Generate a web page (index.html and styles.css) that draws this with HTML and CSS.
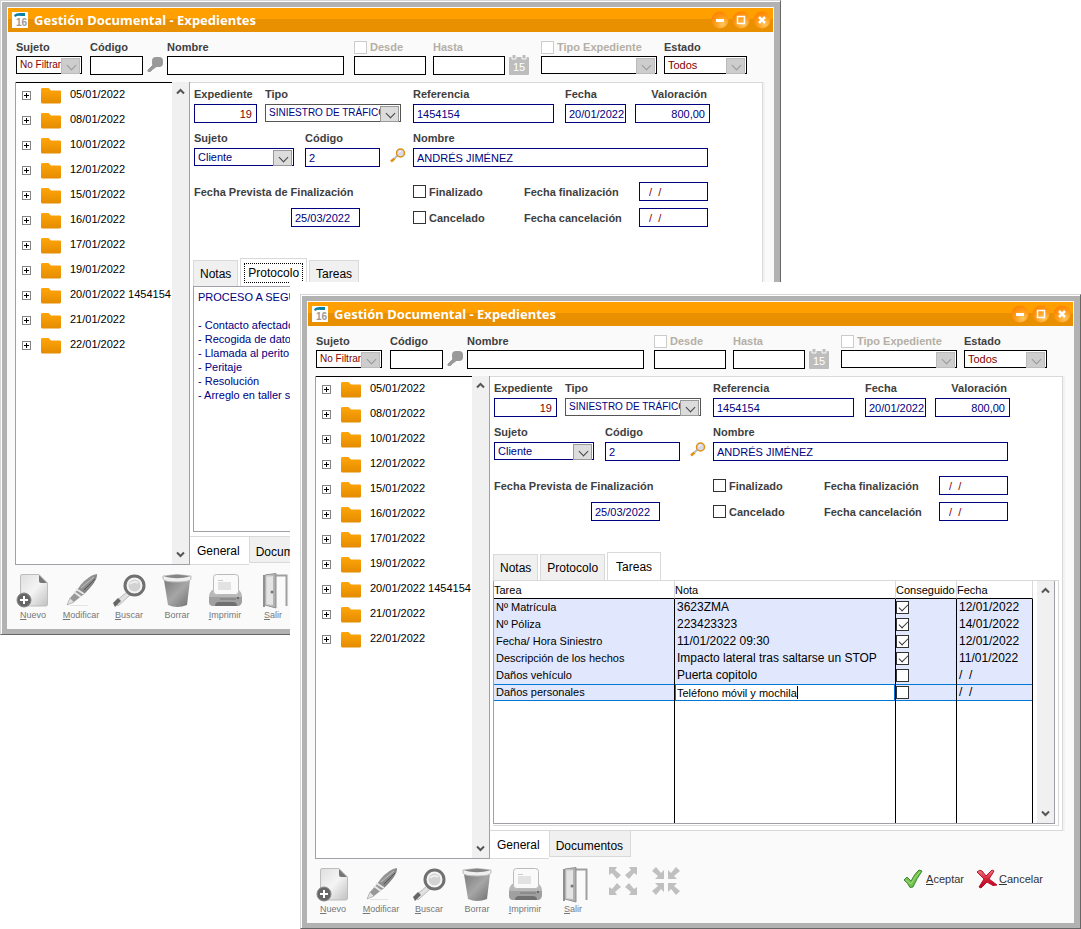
FILE: index.html
```html
<!DOCTYPE html>
<html lang="es">
<head>
    <meta charset="UTF-8">
    <meta name="viewport" content="width=device-width, initial-scale=1.0">
    <title>Gestión Documental - Expedientes</title>
    <link rel="stylesheet" href="styles.css">
</head>
<body>
    <!-- Shared icons -->
    <svg class="sprite" width="0" height="0" aria-hidden="true">
        <defs>
            <linearGradient id="gFolder" x1="0" y1="0" x2="0" y2="1"><stop offset="0" stop-color="#ffa50a"/><stop offset="1" stop-color="#e48c00"/></linearGradient>
            <linearGradient id="gPaper" x1="0" y1="0" x2="1" y2="1"><stop offset="0" stop-color="#dedede"/><stop offset="0.5" stop-color="#f4f4f4"/><stop offset="1" stop-color="#c0c0c0"/></linearGradient>
            <linearGradient id="gGrey" x1="0" y1="0" x2="1" y2="0"><stop offset="0" stop-color="#dcdcdc"/><stop offset="1" stop-color="#a8a8a8"/></linearGradient>
            <linearGradient id="gBin" x1="0" y1="0" x2="1" y2="1"><stop offset="0" stop-color="#7c7c7c"/><stop offset="0.5" stop-color="#a6a6a6"/><stop offset="1" stop-color="#707070"/></linearGradient>
            <linearGradient id="gPen" x1="0" y1="0" x2="1" y2="1"><stop offset="0" stop-color="#b4b4b4"/><stop offset="0.5" stop-color="#8c8c8c"/><stop offset="1" stop-color="#606060"/></linearGradient>
            <linearGradient id="gRed" x1="0" y1="0" x2="0" y2="1"><stop offset="0" stop-color="#f08088"/><stop offset="0.5" stop-color="#d82038"/><stop offset="1" stop-color="#b80020"/></linearGradient>
            <radialGradient id="gBall" cx="0.65" cy="0.75" r="0.75"><stop offset="0" stop-color="#ffc860"/><stop offset="0.5" stop-color="#ffa020"/><stop offset="1" stop-color="#ff8400"/></radialGradient>
        </defs>
        <symbol id="i-app" viewBox="0 0 16 16">
            <rect width="16" height="16" fill="#fff"/>
            <path d="M2 3 Q4 1 8 1 H13 V4 H9 Q6 3 3 5 Z" fill="#0a7fa8"/>
        </symbol>
        <symbol id="i-min" viewBox="0 0 18 18">
            <circle cx="9" cy="9" r="8.5" fill="url(#gBall)"/><path d="M5 9.500 H13" stroke="#fff" stroke-width="3"/>
        </symbol>
        <symbol id="i-max" viewBox="0 0 18 18">
            <circle cx="9" cy="9" r="8.5" fill="url(#gBall)"/><rect x="5.500" y="5.500" width="7" height="7" fill="none" stroke="#fff" stroke-width="1.500"/>
        </symbol>
        <symbol id="i-close" viewBox="0 0 18 18">
            <circle cx="9" cy="9" r="8.5" fill="url(#gBall)"/><path d="M6 6 L12 12 M12 6 L6 12" stroke="#fff" stroke-width="2.500"/>
        </symbol>
        <symbol id="i-folder" viewBox="0 0 20 16">
            <path d="M0 1.500 Q0 0 1 0 H7.500 L10 2.500 H19 Q20 2.500 20 3.500 V14 Q20 15.500 18.500 15.500 H1.500 Q0 15.500 0 14 Z" fill="url(#gFolder)"/>
        </symbol>
        <symbol id="i-key" viewBox="0 0 16 17">
            <rect x="5" y="1" width="11" height="10" rx="4" fill="#999"/>
            <path d="M7 8 L1 14 V15.500 H3.500 L5.500 13.500 L10 10" fill="#999" stroke="#999"/>
        </symbol>
        <symbol id="i-cal" viewBox="0 0 20 20">
            <path d="M0 3 Q0 2 1 2 H19 Q20 2 20 3 V19 Q20 20 19 20 H1 Q0 20 0 19 Z" fill="#bdbdbd"/>
            <path d="M3 0 V4 H7 V0 M13 0 V4 H17 V0" fill="#bdbdbd" stroke="#fafafa"/>
        </symbol>
        <symbol id="i-lens" viewBox="0 0 16 15">
            <path d="M4.500 10.500 L1 13.500" stroke="#e09010" stroke-width="2.500"/>
            <path d="M7.500 7.500 L4.500 10.500" stroke="#bbb" stroke-width="2"/>
            <circle cx="10.500" cy="5" r="4" fill="#d8d8e8" stroke="#e09010" stroke-width="1.500"/>
            <path d="M8.500 4.500 L11 3" stroke="#fff"/>
        </symbol>
        <symbol id="i-new" viewBox="0 0 34 36">
            <path d="M6 1.500 H23 L31.500 10 V31 Q31.500 33 30 33 H6 Q4.500 33 4.500 31 V3 Q4.500 1.500 6 1.500 Z" fill="url(#gPaper)" stroke="#bdbdbd"/>
            <path d="M23 2 V8 Q23 10 25 10 H31 Z" fill="#777"/>
            <circle cx="8" cy="27" r="7" fill="#666" stroke="#888"/>
            <path d="M8 23 V31 M4 27 H12" stroke="#fff" stroke-width="2"/>
        </symbol>
        <symbol id="i-edit" viewBox="0 0 34 36">
            <path d="M6 32.500 H24" stroke="#e4e4e4"/>
            <path d="M3 32 L6 25 L14 16 L20 21 L10 29 Z" fill="#989898"/>
            <path d="M6 25 L10 29 L3 32 Z" fill="#e2e2e2" stroke="#999" stroke-width="0.500"/>
            <path d="M13 17 Q20 6 29 2 L33 1 Q34 8 19 22 Z" fill="url(#gPen)"/>
            <path d="M10 19 L17 24 M12 16 L20 21" stroke="#e8e8e8" stroke-width="2"/>
            <path d="M17 15 L30 4" stroke="#c4c4c4"/>
            <path d="M20 17 L31 6" stroke="#555"/>
        </symbol>
        <symbol id="i-find" viewBox="0 0 34 36">
            <path d="M3 29 L15 19 L18 22 L6 33 Z" fill="#e2e2e2" stroke="#b8b8b8"/>
            <path d="M1 30 L6 25 L9 28 L3 34 Z" fill="#666"/>
            <circle cx="22.500" cy="12.500" r="9.500" fill="#f4f4f4" stroke="#707070" stroke-width="3"/>
            <circle cx="22.500" cy="12.500" r="6" fill="#d2d2d2"/>
            <path d="M18 11 Q22 7 26 10" fill="none" stroke="#eee" stroke-width="2"/>
        </symbol>
        <symbol id="i-bin" viewBox="0 0 34 36">
            <path d="M4 7 H30 L27 32 Q17 36 8 32 Z" fill="url(#gBin)"/>
            <path d="M3 3 Q17 0 31 3 V6 Q30 9 17 9 Q4 9 3 6 Z" fill="#efefef" stroke="#bbb"/>
            <path d="M4 3.500 Q17 0 30 3.500 Q17 7 4 3.500 Z" fill="#858585"/>
        </symbol>
        <symbol id="i-print" viewBox="0 0 34 36">
            <path d="M4 17 H31 Q34 20 34 23 V29 L30 33 H5 L1 29 V23 Q1 20 4 17 Z" fill="#b8b8b8"/>
            <path d="M1 24 H34 V29 Q33 33 30 33 H5 Q1 33 1 29 Z" fill="#a0a0a0"/>
            <path d="M7 33 Q7 29 11 29 H25 Q29 29 29 33 Z" fill="#707070"/>
            <rect x="5.500" y="1.500" width="25" height="20" rx="3" fill="#fafafa" stroke="#bbb"/>
            <path d="M10 7.500 H15" stroke="#ccc"/>
            <rect x="10" y="9" width="13" height="8" fill="#e2e2e2"/>
            <path d="M12 26 H28" stroke="#777"/>
            <circle cx="30" cy="25" r="1" fill="#555"/>
        </symbol>
        <symbol id="i-exit" viewBox="0 0 34 36">
            <path d="M18 2.500 H30.500 V33" fill="none" stroke="#a0a0a0" stroke-width="2"/>
            <path d="M8 2 V34" stroke="#909090" stroke-width="2"/>
            <path d="M9 2 L20 0.500 V35 L9 32 Z" fill="url(#gGrey)" stroke="#909090"/>
            <path d="M11 4 L17 3 V32 L11 31 Z" fill="#e4e4e4"/>
            <circle cx="16" cy="19" r="1.5" fill="#777"/>
        </symbol>
        <symbol id="i-expand" viewBox="0 0 28 28">
            <path d="M0 0 H8 L6 3 L12 8 L8 12 L3 6 L0 8 Z M28 0 V8 L25 6 L20 12 L16 8 L22 3 L20 0 Z M0 28 V20 L3 22 L8 16 L12 20 L6 25 L8 28 Z M28 28 H20 L22 25 L16 20 L20 16 L25 22 L28 20 Z" fill="#c0c0c0"/>
        </symbol>
        <symbol id="i-shrink" viewBox="0 0 28 28">
            <path d="M12 12 H3 L6 9 L0 4 L4 0 L9 6 L12 3 Z M16 12 V3 L19 6 L24 0 L28 4 L22 9 L25 12 Z M12 16 V25 L9 22 L4 28 L0 24 L6 19 L3 16 Z M16 16 H25 L22 19 L28 24 L24 28 L19 22 L16 25 Z" fill="#c0c0c0"/>
        </symbol>
        <symbol id="i-ok" viewBox="0 0 21 20">
            <path d="M1 11 L4 8 L8 12 Q12 4 16 1 L19 2 Q14 9 10 18 L7 18.500 Q5 14 1 11 Z" fill="#72c04e" stroke="#3f8a34"/>
            <path d="M3 11 L8 15 Q12 7 17 3" fill="none" stroke="#a4dc80"/>
        </symbol>
        <symbol id="i-cancel" viewBox="0 0 21 20">
            <path d="M1 3 Q4 0 6 2 L10 7 L16 1 L18 2 L13 10 L21 16 L17 16.500 L11 13 L5 19 L3 18 L8 10 Z" fill="url(#gRed)" stroke="#b8102c"/>
        </symbol>
        <symbol id="i-up" viewBox="0 0 9 7"><path d="M1 5.500 L4.500 2 L8 5.500" fill="none" stroke="#555" stroke-width="2"/></symbol>
        <symbol id="i-down" viewBox="0 0 9 7"><path d="M1 1.500 L4.500 5 L8 1.500" fill="none" stroke="#555" stroke-width="2"/></symbol>
    </svg>

    <div class="desktop">

        <!-- Window: Protocolo tab -->
        <div class="layer">
            <section class="window">
                <div class="frame">
                    <header class="titlebar">
                        <svg class="app-icon"><use href="#i-app"/><text x="4" y="14">16</text></svg>
                        <h1>Gestión Documental - Expedientes</h1>
                        <button type="button" aria-label="Minimizar"><svg><use href="#i-min"/></svg></button>
                        <button type="button" aria-label="Maximizar"><svg><use href="#i-max"/></svg></button>
                        <button type="button" aria-label="Cerrar"><svg><use href="#i-close"/></svg></button>
                    </header>

                    <form class="filters">
                        <div class="field"><label for="a-fsujeto">Sujeto</label><span class="combo off w66"><select id="a-fsujeto" class="maroon small"><option>No Filtrar</option></select></span></div>
                        <div class="field"><label for="a-fcodigo">Código</label><input type="text" id="a-fcodigo" class="w53"></div>
                        <svg class="key"><use href="#i-key"/></svg>
                        <div class="field"><label for="a-fnombre">Nombre</label><input type="text" id="a-fnombre" class="w177"></div>
                        <div class="field dim"><span class="check-label"><input type="checkbox" id="a-cdesde"><label for="a-cdesde">Desde</label></span><input type="text" aria-label="Desde" class="w72"></div>
                        <div class="field dim"><label for="a-hasta">Hasta</label><input type="text" id="a-hasta" class="w72"></div>
                        <svg class="calendar"><use href="#i-cal"/><text x="4" y="16">15</text></svg>
                        <div class="field dim"><span class="check-label"><input type="checkbox" id="a-ctipo"><label for="a-ctipo">Tipo Expediente</label></span><span class="combo off w116"><select aria-label="Tipo Expediente"><option></option></select></span></div>
                        <div class="field"><label for="a-estado">Estado</label><span class="combo off w83"><select id="a-estado" class="maroon"><option>Todos</option></select></span></div>
                    </form>

                    <div class="main">
                        <div class="tree">
                            <ul>
                                <li><button type="button" class="plus" aria-label="Abrir"></button><svg><use href="#i-folder"/></svg>05/01/2022</li>
                                <li><button type="button" class="plus" aria-label="Abrir"></button><svg><use href="#i-folder"/></svg>08/01/2022</li>
                                <li><button type="button" class="plus" aria-label="Abrir"></button><svg><use href="#i-folder"/></svg>10/01/2022</li>
                                <li><button type="button" class="plus" aria-label="Abrir"></button><svg><use href="#i-folder"/></svg>12/01/2022</li>
                                <li><button type="button" class="plus" aria-label="Abrir"></button><svg><use href="#i-folder"/></svg>15/01/2022</li>
                                <li><button type="button" class="plus" aria-label="Abrir"></button><svg><use href="#i-folder"/></svg>16/01/2022</li>
                                <li><button type="button" class="plus" aria-label="Abrir"></button><svg><use href="#i-folder"/></svg>17/01/2022</li>
                                <li><button type="button" class="plus" aria-label="Abrir"></button><svg><use href="#i-folder"/></svg>19/01/2022</li>
                                <li><button type="button" class="plus" aria-label="Abrir"></button><svg><use href="#i-folder"/></svg>20/01/2022 1454154</li>
                                <li><button type="button" class="plus" aria-label="Abrir"></button><svg><use href="#i-folder"/></svg>21/01/2022</li>
                                <li><button type="button" class="plus" aria-label="Abrir"></button><svg><use href="#i-folder"/></svg>22/01/2022</li>
                            </ul>
                            <div class="scrollbar"><svg><use href="#i-up"/></svg><svg><use href="#i-down"/></svg></div>
                        </div>

                        <div class="content">
                            <div class="panel">
                                <form class="record">
                                    <div class="row row-a">
                                        <div class="field"><label for="a-exp">Expediente</label><input type="text" id="a-exp" class="w63 right maroon" value="19"></div>
                                        <div class="field"><label for="a-tipo">Tipo</label><span class="combo grey w136"><select id="a-tipo" class="small"><option>SINIESTRO DE TRÁFICO</option></select></span></div>
                                        <div class="field"><label for="a-ref">Referencia</label><input type="text" id="a-ref" class="w141" value="1454154"></div>
                                        <div class="field"><label for="a-fecha">Fecha</label><input type="text" id="a-fecha" class="w61" value="20/01/2022"></div>
                                        <div class="field"><label for="a-val" class="right">Valoración</label><input type="text" id="a-val" class="w75 right" value="800,00"></div>
                                    </div>
                                    <div class="row row-b">
                                        <div class="field"><label for="a-sujeto">Sujeto</label><span class="combo w100"><select id="a-sujeto"><option>Cliente</option></select></span></div>
                                        <div class="field"><label for="a-codigo">Código</label><input type="text" id="a-codigo" class="w75" value="2"></div>
                                        <svg class="lens"><use href="#i-lens"/></svg>
                                        <div class="field"><label for="a-nombre">Nombre</label><input type="text" id="a-nombre" class="w295" value="ANDRÉS JIMÉNEZ"></div>
                                    </div>
                                    <div class="row row-c">
                                        <label for="a-prev">Fecha Prevista de Finalización</label>
                                        <span class="check-label"><input type="checkbox" id="a-fin"><label for="a-fin">Finalizado</label></span>
                                        <label for="a-ffin">Fecha finalización</label>
                                        <input type="text" id="a-ffin" class="w69 maroon empty-date" value="/  /">
                                        <input type="text" id="a-prev" class="w69 planned" value="25/03/2022">
                                        <span class="check-label"><input type="checkbox" id="a-can"><label for="a-can">Cancelado</label></span>
                                        <label for="a-fcan">Fecha cancelación</label>
                                        <input type="text" id="a-fcan" class="w69 maroon empty-date" value="/  /">
                                    </div>
                                </form>

                                <nav class="tabs">
                                    <button type="button">Notas</button>
                                    <button type="button" class="active focused"><span>Protocolo</span></button>
                                    <button type="button">Tareas</button>
                                </nav>
                                <textarea class="memo" aria-label="Protocolo">PROCESO A SEGUIR

- Contacto afectado
- Recogida de datos
- Llamada al perito
- Peritaje
- Resolución
- Arreglo en taller s</textarea>
                            </div>
                            <nav class="bottom-tabs">
                                <button type="button" class="active">General</button>
                                <button type="button">Documentos</button>
                            </nav>
                        </div>
                    </div>

                    <footer class="toolbar">
                        <button type="button" class="tool"><svg><use href="#i-new"/></svg><span><u>N</u>uevo</span></button>
                        <button type="button" class="tool"><svg><use href="#i-edit"/></svg><span><u>M</u>odificar</span></button>
                        <button type="button" class="tool"><svg><use href="#i-find"/></svg><span><u>B</u>uscar</span></button>
                        <button type="button" class="tool"><svg><use href="#i-bin"/></svg><span>Borrar</span></button>
                        <button type="button" class="tool"><svg><use href="#i-print"/></svg><span><u>I</u>mprimir</span></button>
                        <button type="button" class="tool"><svg><use href="#i-exit"/></svg><span><u>S</u>alir</span></button>
                    </footer>
                </div>
            </section>
        </div>

        <!-- Window: Tareas tab -->
        <div class="layer front">
            <section class="window">
                <div class="frame">
                    <header class="titlebar">
                        <svg class="app-icon"><use href="#i-app"/><text x="4" y="14">16</text></svg>
                        <h1>Gestión Documental - Expedientes</h1>
                        <button type="button" aria-label="Minimizar"><svg><use href="#i-min"/></svg></button>
                        <button type="button" aria-label="Maximizar"><svg><use href="#i-max"/></svg></button>
                        <button type="button" aria-label="Cerrar"><svg><use href="#i-close"/></svg></button>
                    </header>

                    <form class="filters">
                        <div class="field"><label for="b-fsujeto">Sujeto</label><span class="combo off w66"><select id="b-fsujeto" class="maroon small"><option>No Filtrar</option></select></span></div>
                        <div class="field"><label for="b-fcodigo">Código</label><input type="text" id="b-fcodigo" class="w53"></div>
                        <svg class="key"><use href="#i-key"/></svg>
                        <div class="field"><label for="b-fnombre">Nombre</label><input type="text" id="b-fnombre" class="w177"></div>
                        <div class="field dim"><span class="check-label"><input type="checkbox" id="b-cdesde"><label for="b-cdesde">Desde</label></span><input type="text" aria-label="Desde" class="w72"></div>
                        <div class="field dim"><label for="b-hasta">Hasta</label><input type="text" id="b-hasta" class="w72"></div>
                        <svg class="calendar"><use href="#i-cal"/><text x="4" y="16">15</text></svg>
                        <div class="field dim"><span class="check-label"><input type="checkbox" id="b-ctipo"><label for="b-ctipo">Tipo Expediente</label></span><span class="combo off w116"><select aria-label="Tipo Expediente"><option></option></select></span></div>
                        <div class="field"><label for="b-estado">Estado</label><span class="combo off w83"><select id="b-estado" class="maroon"><option>Todos</option></select></span></div>
                    </form>

                    <div class="main">
                        <div class="tree">
                            <ul>
                                <li><button type="button" class="plus" aria-label="Abrir"></button><svg><use href="#i-folder"/></svg>05/01/2022</li>
                                <li><button type="button" class="plus" aria-label="Abrir"></button><svg><use href="#i-folder"/></svg>08/01/2022</li>
                                <li><button type="button" class="plus" aria-label="Abrir"></button><svg><use href="#i-folder"/></svg>10/01/2022</li>
                                <li><button type="button" class="plus" aria-label="Abrir"></button><svg><use href="#i-folder"/></svg>12/01/2022</li>
                                <li><button type="button" class="plus" aria-label="Abrir"></button><svg><use href="#i-folder"/></svg>15/01/2022</li>
                                <li><button type="button" class="plus" aria-label="Abrir"></button><svg><use href="#i-folder"/></svg>16/01/2022</li>
                                <li><button type="button" class="plus" aria-label="Abrir"></button><svg><use href="#i-folder"/></svg>17/01/2022</li>
                                <li><button type="button" class="plus" aria-label="Abrir"></button><svg><use href="#i-folder"/></svg>19/01/2022</li>
                                <li><button type="button" class="plus" aria-label="Abrir"></button><svg><use href="#i-folder"/></svg>20/01/2022 1454154</li>
                                <li><button type="button" class="plus" aria-label="Abrir"></button><svg><use href="#i-folder"/></svg>21/01/2022</li>
                                <li><button type="button" class="plus" aria-label="Abrir"></button><svg><use href="#i-folder"/></svg>22/01/2022</li>
                            </ul>
                            <div class="scrollbar"><svg><use href="#i-up"/></svg><svg><use href="#i-down"/></svg></div>
                        </div>

                        <div class="content">
                            <div class="panel">
                                <form class="record">
                                    <div class="row row-a">
                                        <div class="field"><label for="b-exp">Expediente</label><input type="text" id="b-exp" class="w63 right maroon" value="19"></div>
                                        <div class="field"><label for="b-tipo">Tipo</label><span class="combo grey w136"><select id="b-tipo" class="small"><option>SINIESTRO DE TRÁFICO</option></select></span></div>
                                        <div class="field"><label for="b-ref">Referencia</label><input type="text" id="b-ref" class="w141" value="1454154"></div>
                                        <div class="field"><label for="b-fecha">Fecha</label><input type="text" id="b-fecha" class="w61" value="20/01/2022"></div>
                                        <div class="field"><label for="b-val" class="right">Valoración</label><input type="text" id="b-val" class="w75 right" value="800,00"></div>
                                    </div>
                                    <div class="row row-b">
                                        <div class="field"><label for="b-sujeto">Sujeto</label><span class="combo w100"><select id="b-sujeto"><option>Cliente</option></select></span></div>
                                        <div class="field"><label for="b-codigo">Código</label><input type="text" id="b-codigo" class="w75" value="2"></div>
                                        <svg class="lens"><use href="#i-lens"/></svg>
                                        <div class="field"><label for="b-nombre">Nombre</label><input type="text" id="b-nombre" class="w295" value="ANDRÉS JIMÉNEZ"></div>
                                    </div>
                                    <div class="row row-c">
                                        <label for="b-prev">Fecha Prevista de Finalización</label>
                                        <span class="check-label"><input type="checkbox" id="b-fin"><label for="b-fin">Finalizado</label></span>
                                        <label for="b-ffin">Fecha finalización</label>
                                        <input type="text" id="b-ffin" class="w69 maroon empty-date" value="/  /">
                                        <input type="text" id="b-prev" class="w69 planned" value="25/03/2022">
                                        <span class="check-label"><input type="checkbox" id="b-can"><label for="b-can">Cancelado</label></span>
                                        <label for="b-fcan">Fecha cancelación</label>
                                        <input type="text" id="b-fcan" class="w69 maroon empty-date" value="/  /">
                                    </div>
                                </form>

                                <nav class="tabs">
                                    <button type="button">Notas</button>
                                    <button type="button">Protocolo</button>
                                    <button type="button" class="active">Tareas</button>
                                </nav>
                                <div class="page">
                                    <div class="grid">
                                        <table>
                                            <colgroup><col><col class="c-nota"><col class="c-ok"><col class="c-fecha"></colgroup>
                                            <thead>
                                                <tr><th>Tarea</th><th>Nota</th><th>Conseguido</th><th>Fecha</th></tr>
                                            </thead>
                                            <tbody>
                                                <tr><td>Nº Matrícula</td><td>3623ZMA</td><td><input type="checkbox" aria-label="Conseguido" checked></td><td>12/01/2022</td></tr>
                                                <tr><td>Nº Póliza</td><td>223423323</td><td><input type="checkbox" aria-label="Conseguido" checked></td><td>14/01/2022</td></tr>
                                                <tr><td>Fecha/ Hora Siniestro</td><td>11/01/2022 09:30</td><td><input type="checkbox" aria-label="Conseguido" checked></td><td>12/01/2022</td></tr>
                                                <tr><td>Descripción de los hechos</td><td>Impacto lateral tras saltarse un STOP</td><td><input type="checkbox" aria-label="Conseguido" checked></td><td>11/01/2022</td></tr>
                                                <tr><td>Daños vehículo</td><td>Puerta copitolo</td><td><input type="checkbox" aria-label="Conseguido"></td><td>/  /</td></tr>
                                                <tr class="current"><td>Daños personales</td><td class="editing"><span class="editor"><input type="text" aria-label="Nota" value="Teléfono móvil y mochila"><i class="caret"></i></span></td><td><input type="checkbox" aria-label="Conseguido"></td><td>/  /</td></tr>
                                                <tr class="filler"><td></td><td></td><td></td><td></td></tr>
                                            </tbody>
                                        </table>
                                        <div class="scrollbar"><svg><use href="#i-up"/></svg><svg><use href="#i-down"/></svg></div>
                                    </div>
                                </div>
                            </div>
                            <nav class="bottom-tabs">
                                <button type="button" class="active">General</button>
                                <button type="button">Documentos</button>
                            </nav>
                        </div>
                    </div>

                    <footer class="toolbar">
                        <button type="button" class="tool"><svg><use href="#i-new"/></svg><span><u>N</u>uevo</span></button>
                        <button type="button" class="tool"><svg><use href="#i-edit"/></svg><span><u>M</u>odificar</span></button>
                        <button type="button" class="tool"><svg><use href="#i-find"/></svg><span><u>B</u>uscar</span></button>
                        <button type="button" class="tool"><svg><use href="#i-bin"/></svg><span>Borrar</span></button>
                        <button type="button" class="tool"><svg><use href="#i-print"/></svg><span><u>I</u>mprimir</span></button>
                        <button type="button" class="tool"><svg><use href="#i-exit"/></svg><span><u>S</u>alir</span></button>
                        <div class="arrows">
                            <button type="button" aria-label="Expandir"><svg><use href="#i-expand"/></svg></button>
                            <button type="button" aria-label="Contraer"><svg><use href="#i-shrink"/></svg></button>
                        </div>
                        <div class="actions">
                            <button type="button"><svg><use href="#i-ok"/></svg><span><u>A</u>ceptar</span></button>
                            <button type="button"><svg><use href="#i-cancel"/></svg><span><u>C</u>ancelar</span></button>
                        </div>
                    </footer>
                </div>
            </section>
        </div>
    </div>
</body>
</html>
```
FILE: styles.css
```css
* {
    box-sizing: border-box;
}
body {
    margin: 0;
    background: #fff;
    font-family: "Liberation Sans", Arial, sans-serif;
    font-size: 11px;
    line-height: 14px;
    color: #000;
}
button, input, select, textarea {
    font: inherit;
    margin: 0;
    border-radius: 0;
    outline: none;
}
button {
    padding: 0;
    border: none;
    background: none;
    color: inherit;
    cursor: pointer;
}
svg {
    display: block;
    flex: none;
}
.sprite {
    position: absolute;
}

/* Stacked windows */
.desktop {
    display: grid;
}
.layer {
    grid-area: 1 / 1;
    align-self: start;
    min-width: 0;
    margin-right: 300px;
}
.front {
    margin: 282px 0 0 290px;
    padding: 12px 0 0 10px;
    background: #fff;
}
.window {
    border: 1px solid #d6d6d6;
    border-right-color: #666;
    border-bottom-color: #666;
    padding: 1px 0 0 1px;
}
.frame {
    border: 6px solid #b2b2b2;
    border-width: 5px 6px 5px 5px;
    padding: 1px;
    background: #fafafa;
}

/* Title bar */
.titlebar {
    display: flex;
    align-items: center;
    gap: 3px;
    height: 24px;
    padding: 0 2px 0 4px;
    background: linear-gradient(#ffa000 11px, #e89000 11px);
}
.titlebar h1 {
    flex: 1;
    margin: 0 0 0 3px;
    font-family: "Noto Sans", Tahoma, sans-serif;
    font-size: 13px;
    color: #fff;
}
.titlebar svg {
    width: 18px;
    height: 18px;
}
.titlebar .app-icon {
    width: 16px;
    height: 16px;
    font-size: 10px;
    font-weight: bold;
    fill: #9a9a9a;
}

/* Fields */
label {
    display: block;
    font-weight: bold;
    color: #404040;
    white-space: nowrap;
}
.dim label {
    color: #b5afa5;
}
input[type="text"] {
    display: block;
    height: 19px;
    padding: 0 0 0 3px;
    border: 1px solid #000080;
    background: #fff;
    color: #000080;
}
.combo {
    display: block;
    position: relative;
    height: 18px;
    border: 1px solid #000080;
    background: #fff;
}
.combo select {
    appearance: none;
    display: block;
    width: 100%;
    height: 16px;
    padding: 0 17px 0 3px;
    border: none;
    background: none;
    color: #000080;
}
.combo::before {
    content: "";
    position: absolute;
    top: 1px;
    right: 1px;
    width: 17px;
    height: 14px;
    border: 1px solid #999;
    background: #dcdcdc;
}
.combo::after {
    content: "";
    position: absolute;
    top: 5px;
    right: 6px;
    width: 6px;
    height: 6px;
    border: solid #444;
    border-width: 0 1px 1px 0;
    transform: rotate(45deg);
}
.combo.off::before {
    border-color: #bbb;
    background: #cdcdcd;
}
.combo.off::after {
    border-color: #999;
}
.combo.grey {
    border-color: #555;
}
.combo .small {
    font-size: 10px;
}
input[type="text"].maroon, .combo .maroon {
    color: #800000;
}
input[type="text"].right {
    padding-right: 4px;
}
.right {
    text-align: right;
}
input[type="checkbox"] {
    appearance: none;
    display: block;
    flex: none;
    width: 13px;
    height: 13px;
    border: 1px solid #333;
    background: #fff;
}
input[type="checkbox"]:checked::before {
    content: "";
    display: block;
    width: 8px;
    height: 4px;
    margin: 2px 0 0 2px;
    border: solid #333;
    border-width: 0 0 1px 1px;
    transform: rotate(-45deg);
}
.dim input[type="checkbox"] {
    border-color: #ccc;
}
.check-label {
    display: flex;
    align-items: center;
    gap: 3px;
}
.w53 { width: 53px; }
.w61 { width: 61px; }
.w63 { width: 63px; }
.w66 { width: 66px; }
.w69 { width: 69px; }
.w72 { width: 72px; }
.w75 { width: 75px; }
.w83 { width: 83px; }
.w100 { width: 100px; }
.w116 { width: 116px; }
.w136 { width: 136px; }
.w141 { width: 141px; }
.w177 { width: 177px; }
.w295 { width: 295px; }

/* Filter bar */
.filters {
    display: grid;
    grid-template-columns: 70px 53px 16px 183px 75px 72px 28px 119px 83px;
    column-gap: 4px;
    height: 50px;
    padding: 8px 0 0 8px;
}
.filters .field {
    display: flex;
    flex-direction: column;
    gap: 2px;
}
.filters input[type="text"], .filters .combo {
    border-color: #000;
}
.filters .key {
    width: 16px;
    height: 17px;
    margin-top: 16px;
}
.filters .calendar {
    width: 20px;
    height: 20px;
    margin-top: 15px;
    fill: #fff;
}

/* Tree and record */
.main {
    display: grid;
    grid-template-columns: 175px 1fr;
    padding: 0 10px 0 7px;
}
.tree {
    display: grid;
    grid-template-columns: 1fr 17px;
    border: solid #a0a0a6;
    border-width: 0 1px 1px;
    background: #fff;
}
.tree ul {
    margin: 0;
    padding: 0 0 0 6px;
    border-top: 1px solid #000;
    list-style: none;
}
.tree li {
    display: flex;
    align-items: center;
    height: 25px;
    padding-bottom: 3px;
    white-space: nowrap;
}
.tree li svg {
    width: 20px;
    height: 16px;
    margin: 3px 9px 0 10px;
}
.plus {
    width: 9px;
    height: 9px;
    margin-top: 3px;
    border: 1px solid #848484;
    background: linear-gradient(#000, #000) center / 5px 1px no-repeat, linear-gradient(#000, #000) center / 1px 5px no-repeat;
}
.scrollbar {
    display: flex;
    flex-direction: column;
    align-items: center;
    justify-content: space-between;
    padding: 6px 0;
    background: #f0f0f0;
}
.scrollbar svg {
    width: 9px;
    height: 7px;
}
.content {
    display: flex;
    flex-direction: column;
    min-width: 0;
}
.panel {
    display: flex;
    flex: 1;
    flex-direction: column;
    padding: 4px 3px 4px 3px;
    border: solid #d9d9d9;
    border-width: 1px 1px 1px 0;
    background: #fff;
    box-shadow: 2px 0 #f2f2f2;
}
.record {
    display: grid;
    gap: 8px;
    padding-left: 1px;
}
.row {
    display: grid;
    column-gap: 4px;
}
.row .field {
    display: flex;
    flex-direction: column;
    gap: 3px;
}
.row-a {
    grid-template-columns: 67px 144px 148px 66px 75px;
}
.row-b {
    grid-template-columns: 107px 81px 19px 295px;
}
.row-c {
    grid-template-columns: 215px 107px 111px 69px;
    row-gap: 7px;
    align-items: center;
    margin-top: 7px;
}
.row-a label.right {
    padding-right: 3px;
}
.lens {
    width: 16px;
    height: 15px;
    margin-top: 17px;
}
.planned {
    margin-left: 97px;
}
.row-c .empty-date {
    padding-left: 9px;
    white-space: pre;
}

/* Tabs */
.tabs {
    display: flex;
    align-items: flex-end;
    gap: 2px;
    height: 28px;
    margin-top: 31px;
    font-size: 12px;
}
.tabs button {
    height: 26px;
    padding: 0 6px;
    border: 1px solid #d9d9d9;
    border-bottom: none;
    background: #f0f0f0;
}
.tabs .active {
    height: 28px;
    padding: 0 8px;
    background: #fff;
}
.tabs .focused {
    padding: 0 3px;
}
.focused span {
    display: block;
    padding: 2px 3px;
    border: 1px dotted #000;
}
.memo {
    flex: 1;
    min-height: 246px;
    padding: 3px 4px;
    border: 1px solid #a0a0a6;
    background: #fff;
    color: #000080;
    resize: none;
    overflow: hidden;
}
.bottom-tabs {
    display: flex;
    align-items: flex-start;
    height: 28px;
    font-size: 12px;
}
.bottom-tabs button {
    height: 26px;
    padding: 4px 7px 0 6px;
    border: 1px solid #d9d9d9;
    border-top: none;
    background: #f0f0f0;
}
.bottom-tabs .active {
    height: 28px;
    padding: 0 9px 0 7px;
    border-left: none;
    border-right: none;
    background: #fff;
}

/* Task grid */
.page {
    padding: 0 3px 1px 0;
    border: solid #d9d9d9;
    border-width: 1px 1px 1px 0;
}
.grid {
    display: grid;
    grid-template-columns: 1fr 17px;
    border: solid #a0a0a6;
    border-width: 0 1px 1px;
}
.grid table {
    width: calc(100% - 4px);
    border-collapse: separate;
    border-spacing: 0;
    table-layout: fixed;
}
.c-nota {
    width: 221px;
}
.c-ok {
    width: 61px;
}
.c-fecha {
    width: 76px;
}
.grid th {
    height: 18px;
    padding: 0 1px 0 0;
    border-right: 1px solid #d9d9d9;
    border-bottom: 1px solid #000;
    font-weight: normal;
    text-align: left;
    white-space: nowrap;
}
.grid td {
    height: 17px;
    padding: 0 2px 1px;
    border-right: 1px solid #000;
    background: #e1e8fd;
    font-size: 12px;
    white-space: pre;
}
.grid td:first-child {
    font-size: 11px;
}
.grid td:nth-child(3) {
    padding: 0;
}
.grid .current td {
    box-shadow: inset 0 1px #0078d7, inset 0 -1px #0078d7;
}
.grid .current td.editing {
    padding: 0;
    background: #fff;
}
.editor {
    display: block;
    position: relative;
    border: 1px solid #0078d7;
}
.editor input[type="text"] {
    width: 100%;
    height: 15px;
    padding: 0 1px;
    border: none;
    color: #000;
    font-size: 11px;
}
.caret {
    position: absolute;
    top: 1px;
    left: 121px;
    width: 1px;
    height: 13px;
    background: #000;
}
.grid .filler td {
    height: 122px;
    background: #fff;
}

/* Toolbar */
.toolbar {
    display: flex;
    align-items: flex-start;
    height: 63px;
    padding: 8px 30px 0 1px;
}
.tool {
    width: 48px;
    font-size: 9px;
    line-height: 12px;
    color: #777;
    text-align: center;
}
.tool svg {
    width: 34px;
    height: 36px;
    margin: 0 auto;
}
.arrows {
    display: flex;
    gap: 15px;
    margin-left: 12px;
}
.arrows svg {
    width: 28px;
    height: 28px;
}
.actions {
    display: flex;
    gap: 12px;
    margin: 2px 0 0 auto;
    color: #333;
}
.actions button {
    display: flex;
    align-items: center;
    gap: 2px;
}
.actions svg {
    width: 21px;
    height: 20px;
}
```
